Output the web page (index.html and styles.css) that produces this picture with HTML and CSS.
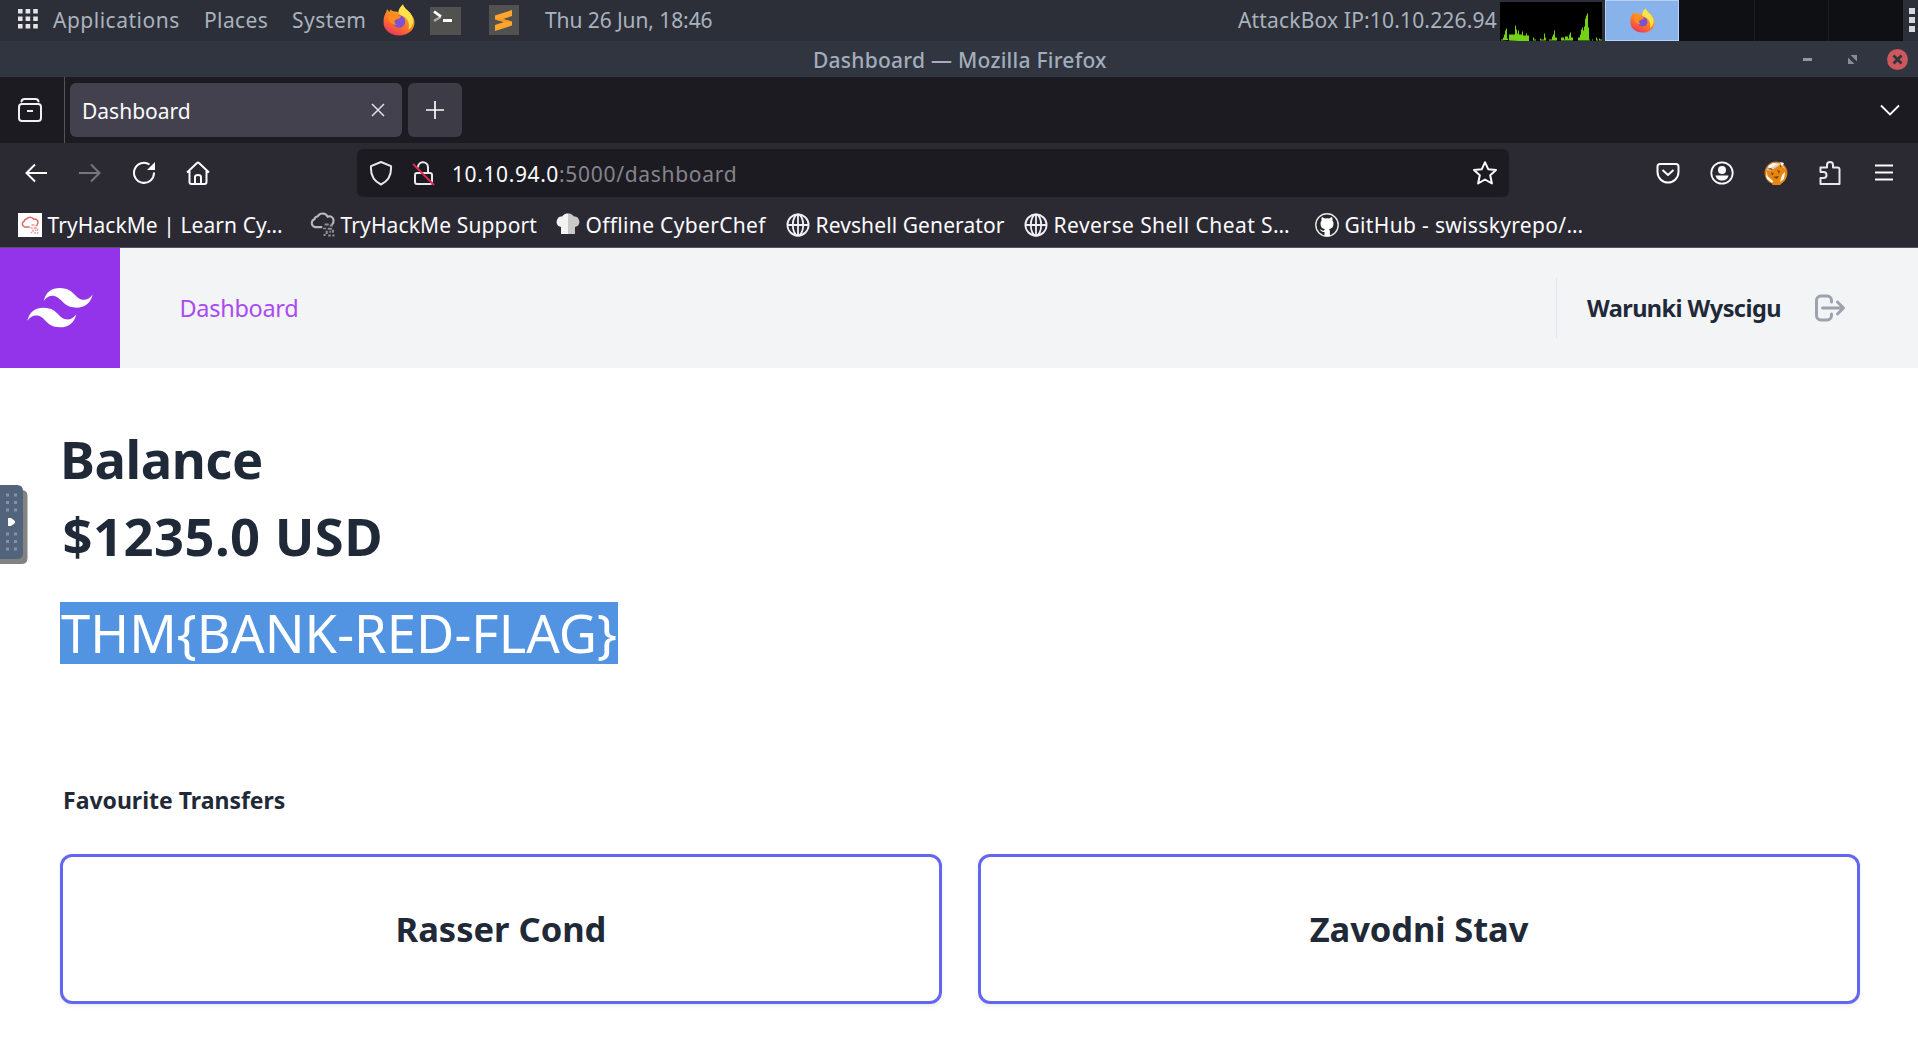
FILE: index.html
```html
<!DOCTYPE html>
<html lang="en">
<head>
<meta charset="utf-8">
<title>Dashboard</title>
<link rel="stylesheet" href="styles.css">
</head>
<body>
<svg class="defs" width="0" height="0">
  <defs>
    <linearGradient id="fx-body" x1="0.8" y1="0" x2="0.3" y2="1">
      <stop offset="0" stop-color="#ffe04a"/><stop offset="0.35" stop-color="#ff9a22"/><stop offset="0.7" stop-color="#ff6a2c"/><stop offset="1" stop-color="#e8365f"/>
    </linearGradient>
    <symbol id="firefox" viewBox="0 0 32 32">
      <path fill="url(#fx-body)" d="M20 .5c1 4 5 5.500 7.500 9 2 2.500 4 5 4 9C31.500 26 25 31.500 16 31.500S.5 26 .5 18c0-5 1.500-8.500 3-10.500l.5-2.500 2.500 3 1-2.500C9 7 10.500 7.500 12 7.500c1.500 0 2.500.3 3.500 1C15.500 5.500 17.500 2.500 20 .5z"/>
      <path fill="#ffe14a" d="M20 .5c1 4 5 5.500 7.500 9 2 3 3 6 2.500 10-1 3-2.500 5-4.500 6 1.500-6-.5-10.500-4-12.500-3-1.500-5.500-2.500-6-4.500C15.500 5.500 17.500 2.500 20 .5z"/>
      <circle cx="16" cy="17.500" r="6.300" fill="#7e52cf"/>
      <path fill="#ff8a20" d="M5 11c3-2 7-2 10 0l3 1.500c-1 2.500-4 2.500-6 3.500-1 1.500 0 4 2 5-4 0-8-3-9-6z"/>
    </symbol>
    <symbol id="globe" viewBox="0 0 24 24">
      <g fill="none" stroke="#f0eff5" stroke-width="1.800"><circle cx="12" cy="12" r="10.600"/><ellipse cx="12" cy="12" rx="5.200" ry="10.600"/><path d="M1.500 12h21M12 1.500v21"/></g>
    </symbol>
    <symbol id="cloud" viewBox="0 0 24 24">
      <path fill="none" stroke="currentColor" stroke-width="2" stroke-linecap="round" d="M11 14.500H4.500a4 4 0 0 1-.3-7.500A3.800 3.800 0 0 1 7.500 4 5.500 5.500 0 0 1 17 4.500a4 4 0 0 1 5.500 4.500c0 1.500-1 2.500-1 2.500"/>
      <path fill="currentColor" opacity=".7" d="M14 11h4v2h-4zM19 12h3v2h-3zM12.500 15h3v1.500h-3zM17 15h4v2h-4zM15 18h2v3h-2zM18.500 18h1.500v2h-1.500zM21 17h2v3h-2zM13 21h2v2h-2zM17.500 21.500h2.500v2h-2.500zM21.500 21.500h2v2h-2z"/>
    </symbol>
  </defs>
</svg>

<header class="panel">
  <svg class="apps" width="20" height="20" viewBox="0 0 20 20"><path fill="#e3e5e8" d="M0 0h4.600v4.600H0zM7.600 0h4.600v4.600H7.600zM15.200 0h4.600v4.600h-4.600zM0 7.500h4.600v4.600H0zM7.600 7.500h4.600v4.600H7.600zM15.200 7.500h4.600v4.600h-4.600zM0 15h4.600v4.600H0zM7.600 15h4.600v4.600H7.600zM15.200 15h4.600v4.600h-4.600z"/></svg>
  <span class="t-apps">Applications</span>
  <span class="t-places">Places</span>
  <span class="t-system">System</span>
  <svg class="launcher" width="32" height="32"><use href="#firefox"/></svg>
  <svg width="31" height="28" viewBox="0 0 31 28"><path fill="#515250" d="M0 0h31v28H0z"/><path fill="none" stroke="#aaa" stroke-width="2.600" d="M4 14l6.500-4"/><path fill="none" stroke="#fff" stroke-width="2.800" d="M4 4.500l7 5.200"/><path fill="#fff" d="M13 12h9v3h-9z"/></svg>
  <svg class="launcher" width="30" height="30" viewBox="0 0 30 30"><path fill="#515250" d="M0 0h30v30H0z"/><path fill="#ffa52e" d="M6 10.500L23 5v6l-9 3 9 2.500v4L6 26v-6l9-3-9-2.500z"/><path fill="#f59524" d="M6 14.500l8-.5 9 2.500-8 .5z"/></svg>
  <span class="t-clock">Thu 26 Jun, 18:46</span>
  <span class="t-ip">AttackBox IP:10.10.226.94</span>
  <svg class="cpu" width="102" height="40" viewBox="0 0 102 40"><path fill="#000" d="M0 1h102v39H0z"/><path fill="#73d216" d="M1 39.500v-1h2v-2h1v-3h1v-4h1v-2h1v10h1v1.500zM9 39.500v-6h6v-9h1v4h1v4h1v-3h1v4h3v-3h1v4h3v-2h1v2h2v6zM33 39.500v-3h1v2h2v1zM40 39.500v-2h1v1h3v-6h1v4h1v3zM49 39.500v-1h3v-3h1v-2h1v-4h1v7h2v3zM61 39.500v-3h3v2h1v-3h3v2h1v-4h1v-2h1v5h2v3zM78 39.500v-3h2v-3h1v-5h1v-2h1v3h1v-4h1v-8h1v-3h1v-2h1v14h1v12h1v1zM92 39.500v-1h1v1zM96 39.500v-3h1v2h1v1zM99 39.500v-2h1v1h2v1z"/></svg>
  <div class="workspace active"><svg width="25" height="25"><use href="#firefox"/></svg></div>
  <div class="workspaces"><i></i><i></i><i></i></div>
  <svg class="grip" width="6" height="26" viewBox="0 0 6 26"><path fill="#d5d8dc" d="M0 0h6v6H0zM0 9h6v6H0zM0 18h6v6H0z"/></svg>
</header>

<div class="titlebar">
  <span class="t-title">Dashboard — Mozilla Firefox</span>
  <div class="window-controls">
    <svg width="9" height="21" viewBox="0 0 9 21"><path fill="#9197a3" d="M0 9h9v3H0z"/></svg>
    <svg width="9" height="21" viewBox="0 0 9 21"><path fill="#868c98" d="M2.500 6H9v6.500zM0 8.500v6.500h6.500z"/></svg>
    <svg width="21" height="21" viewBox="0 0 21 21"><circle cx="10.500" cy="10.500" r="10.500" fill="#cc575d"/><path stroke="#2f343f" stroke-width="2.800" d="M6.500 6.500l8 8M14.500 6.500l-8 8"/></svg>
  </div>
</div>

<div class="tabs">
  <div class="view"><svg width="24" height="24" viewBox="0 0 24 24" fill="none" stroke="#f0eff5" stroke-width="2"><path d="M3.500 3.500Q4 1 6.500 1h11q2.500 0 3 2.500" stroke-linecap="round"/><rect x="1" y="6" width="22" height="17" rx="3"/><path d="M9 13h6"/></svg></div>
  <div class="tab"><span class="t-tab">Dashboard</span><svg width="14" height="14" viewBox="0 0 14 14"><path stroke="#e0dfe6" stroke-width="1.500" d="M1 1l12 12M13 1L1 13"/></svg></div>
  <div class="newtab"><svg width="18" height="18" viewBox="0 0 18 18"><path stroke="#fbfbfe" stroke-width="1.700" d="M9 0v18M0 9h18"/></svg></div>
  <svg class="chevron" width="20" height="12" viewBox="0 0 20 12"><path fill="none" stroke="#fbfbfe" stroke-width="1.800" d="M1 1.500l9 9 9-9"/></svg>
</div>

<div class="toolbar">
  <div class="buttons">
    <svg width="24" height="24" viewBox="0 0 24 24" fill="none" stroke="#fbfbfe" stroke-width="2"><path d="M23 12H3M11 3.500L2.500 12l8.500 8.500"/></svg>
    <svg width="24" height="24" viewBox="0 0 24 24" fill="none" stroke="#77767f" stroke-width="2"><path d="M1 12h20M13 3.500l8.500 8.500-8.500 8.500"/></svg>
    <svg width="24" height="24" viewBox="0 0 24 24"><path fill="none" stroke="#fbfbfe" stroke-width="2" d="M22 11.500A10 10 0 1 1 17.500 3.500"/><path fill="#fbfbfe" d="M23 1v8h-8z"/></svg>
    <svg width="24" height="24" viewBox="0 0 24 24" fill="none" stroke="#fbfbfe" stroke-width="2" stroke-linejoin="round"><path d="M1 11.500L11 2q1-1 2 0l10 9.500M3.500 10v11q0 2 2 2h13q2 0 2-2V10M9 23v-7q0-2 3-2t3 2v7"/></svg>
  </div>
  <div class="urlbar">
    <svg class="shield" width="24" height="26" viewBox="0 0 24 26"><path fill="none" stroke="#e8e7ee" stroke-width="2" stroke-linejoin="round" d="M12 2l10 4.200c.6 8-2.500 14.800-10 18.300C4.500 21 1.400 14.200 2 6.200z"/></svg>
    <svg class="lock" width="24" height="26" viewBox="0 0 24 26"><path fill="none" stroke="#e8e7ee" stroke-width="2" d="M7 7.500A5 5 0 0 1 17 7v6M5 13h14q2 0 2 2v7q0 2-2 2H6q-2 0-2-2v-7q0-2 2-2"/><path stroke="#e22850" stroke-width="2" d="M2 4l21 21"/></svg>
    <span class="t-host">10.10.94.0</span><span class="t-path">:5000/dashboard</span>
    <svg class="star" width="26" height="26" viewBox="0 0 26 26"><path fill="none" stroke="#fbfbfe" stroke-width="2" stroke-linejoin="round" d="M13 2.200l3.200 7 7.800.8-5.800 5.200 1.700 8.300-6.900-4-6.900 4 1.700-8.300L2 10l7.800-.8z"/></svg>
  </div>
  <div class="buttons end">
    <svg width="24" height="24" viewBox="0 0 24 24" fill="none" stroke="#fbfbfe" stroke-width="2"><path d="M4 3h16q2.500 0 2.500 2.500v5.500a10.300 10.300 0 0 1-21 0V5.500Q1.500 3 4 3zM6.500 9l5.500 5 5.500-5" stroke-linejoin="round"/></svg>
    <svg width="24" height="24" viewBox="0 0 24 24"><circle cx="12" cy="12" r="10.700" fill="none" stroke="#fbfbfe" stroke-width="1.800"/><circle cx="12" cy="9" r="4" fill="#fbfbfe"/><path fill="#fbfbfe" d="M5.500 14.500h13c-.5 3-3 5-6.500 5s-6-2-6.500-5z"/></svg>
    <svg width="24" height="24" viewBox="0 0 24 24"><circle cx="12" cy="12" r="10.800" fill="#ddd5c8" stroke="#d9790a" stroke-width="1.300"/><path fill="#e8860d" d="M2 9l5 .5 8-5 4-3v5l3 2 1 5-2 6-5 4.500-8 .5 1-4-5-5z"/><path fill="#7a430c" d="M7 11l3 1.500-2 2zM13 9l3 1-1 3zM9 16l6-1-2 3zM3 8l4-1 2 2zM16 6l1-4 1 4z"/><path fill="#fff" d="M16 1l2 5 2-4zM18 14l3-3-1 7-4 3zM2 14l7 6-1 2-5-4zM4 5l5-3 4 1-7 4z"/></svg>
    <svg width="24" height="26" viewBox="0 0 24 26" fill="none" stroke="#e8e7ee" stroke-width="2" stroke-linejoin="round"><path d="M2.500 24V18h3a3 3 0 0 0 0-6h-3V7.500H9V5a3 3 0 0 1 6 0v2.500h4.500q2 0 2 2V24z"/></svg>
    <svg width="24" height="24" viewBox="0 0 24 24"><path stroke="#fbfbfe" stroke-width="1.900" d="M3 4.500h18M3 11.500h18M3 18.500h18"/></svg>
  </div>
</div>

<nav class="bookmarks">
  <a><svg class="red" width="24" height="24" viewBox="-4 -4 32 32"><path fill="#fff" d="M-4-4h32v32H-4z"/><use href="#cloud" width="24" height="24"/></svg><span class="t-b1">TryHackMe | Learn Cy…</span></a>
  <a><svg class="grey" width="25" height="25"><use href="#cloud"/></svg><span class="t-b2">TryHackMe Support</span></a>
  <a><svg width="24" height="24" viewBox="0 0 24 24"><path fill="#f3f3f3" d="M5 21v-7C1 13 0 10 1 7c1-3 3-4 5-3.500C8 1 10 .5 12 .5V21z"/><path fill="#c9c9c9" d="M19 21v-7c4-1 5-4 4-7-1-3-3-4-5-3.500C16 1 14 .5 12 .5V21z"/></svg><span class="t-b3">Offline CyberChef</span></a>
  <a><svg width="24" height="24"><use href="#globe"/></svg><span class="t-b4">Revshell Generator</span></a>
  <a><svg width="24" height="24"><use href="#globe"/></svg><span class="t-b5">Reverse Shell Cheat S…</span></a>
  <a><svg width="24" height="24" viewBox="0 0 24 24"><circle cx="12" cy="12" r="11.200" fill="#24292e" stroke="#e8e8e8" stroke-width="1.400"/><path fill="#fff" d="M9.500 23v-4c-3 .5-3.500-1.500-5-2.500 2-.5 2.500 1.500 4.500 1.200.2-.8.500-1.300.9-1.700C7 15.500 5.500 14 5.500 10.500c0-1.300.4-2.300 1.100-3.100-.3-1-.2-2.200.2-3.100 1.200 0 2.200.7 3 1.300a10 10 0 0 1 4.400 0c.8-.6 1.800-1.300 3-1.300.4.9.5 2.100.2 3.100.7.800 1.100 1.800 1.100 3.100 0 3.500-1.500 5-4.400 5.500.5.500.8 1.300.8 2.500V23z"/></svg><span class="t-b6">GitHub - swisskyrepo/…</span></a>
</nav>

<div class="site-nav">
  <div class="brand"><svg width="66" height="40" viewBox="0 0 54 33"><path fill="#fff" fill-rule="evenodd" d="M27 0c-7.200 0-11.700 3.600-13.500 10.800 2.700-3.600 5.850-4.950 9.450-4.050 2.054.513 3.522 2.004 5.147 3.653C30.744 13.090 33.808 16.200 40.500 16.200c7.200 0 11.700-3.600 13.500-10.800-2.700 3.600-5.850 4.950-9.450 4.050-2.054-.513-3.522-2.004-5.147-3.653C36.756 3.110 33.692 0 27 0zM13.500 16.200C6.300 16.200 1.800 19.800 0 27c2.700-3.600 5.850-4.950 9.450-4.050 2.054.514 3.522 2.004 5.147 3.653C17.244 29.290 20.308 32.400 27 32.400c7.200 0 11.700-3.600 13.500-10.800-2.700 3.600-5.850 4.950-9.450 4.050-2.054-.513-3.522-2.004-5.147-3.653C23.256 19.310 20.192 16.200 13.500 16.200z"/></svg></div>
  <a class="t-nav">Dashboard</a>
  <div class="user">
    <span class="t-user">Warunki Wyscigu</span>
    <svg width="36" height="36" viewBox="0 0 24 24" fill="none" stroke="#9ca3af" stroke-width="2" stroke-linecap="round" stroke-linejoin="round"><path d="M17 16l4-4m0 0l-4-4m4 4H7m6 4v1a3 3 0 01-3 3H6a3 3 0 01-3-3V7a3 3 0 013-3h4a3 3 0 013 3v1"/></svg>
  </div>
</div>

<main class="content">
  <h1 class="balance">Balance</h1>
  <p class="amount">$1235.0 USD</p>
  <p class="flag">THM{BANK-RED-FLAG}</p>
  <h2 class="favourites">Favourite Transfers</h2>
  <div class="cards">
    <div class="card">Rasser Cond</div>
    <div class="card zav">Zavodni Stav</div>
  </div>
</main>

<svg class="handle" width="28" height="79" viewBox="0 0 28 79">
  <path fill="#828282" d="M0 5h21.500q6 0 6 6v62q0 6-6 6H0z"/>
  <path fill="#52647b" d="M0 0h17q6 0 6 6v62q0 6-6 6H0z"/>
  <path fill="#8492a6" d="M6 8.500h3v3H6zM14 8.500h3v3h-3zM6 16h3v3H6zM14 16h3v3h-3zM6 23.500h3v3H6zM14 23.500h3v3h-3zM6 47.500h3v3H6zM14 47.500h3v3h-3zM6 55h3v3H6zM14 55h3v3h-3zM6 62.500h3v3H6zM14 62.500h3v3h-3z"/>
  <path fill="#fff" d="M8 33h3l4 3v2l-4 3H8z"/>
</svg>
</body>
</html>
```
FILE: styles.css
```css
* { box-sizing: border-box; }
body {
  margin: 0;
  height: 1038px;
  overflow: hidden;
  background: #fff;
  color: #1f2937;
  font-family: "Noto Sans", "Open Sans", sans-serif;
  font-size: 21px;
  white-space: nowrap;
}
svg { display: block; flex: none; }
.defs { position: absolute; }

/* Desktop panel */
.panel {
  display: grid;
  grid-template-columns: 53px 151px 88px 91px 47px 59px 56px 693px 262px 104px 75px 1fr 15px;
  align-items: center;
  height: 41px;
  background: #2c2f37;
  color: #a9b2bf;
}
.panel > span { line-height: 39px; padding-bottom: 1px; }
.apps { margin-left: 18px; margin-top: -3px; }
.launcher { margin-top: -1px; }
.t-apps { letter-spacing: .5px; }
.t-places { letter-spacing: .4px; }
.t-system { letter-spacing: .5px; }
.t-clock { letter-spacing: -.09px; }
.t-ip { letter-spacing: .17px; }
.workspace {
  display: flex;
  align-items: center;
  justify-content: center;
  height: 41px;
  margin-left: 1px;
  background: #88b3ea;
  border: 1px solid #b5d2f6;
}
.workspaces {
  display: grid;
  grid-template-columns: 1fr 1fr 1fr;
  height: 41px;
  background: #0f1013;
}
.workspaces i + i { border-left: 1px solid #1b1d21; }
.grip { margin-left: 6px; }

/* Window title */
.titlebar {
  display: grid;
  grid-template-columns: 813px 1fr auto;
  align-items: center;
  height: 36px;
  background: #303540;
  color: #a3adbb;
}
.t-title { grid-column: 2; padding-top: 2px; font-weight: 500; letter-spacing: .25px; }
.window-controls { display: flex; gap: 36px; padding-right: 10px; }
.window-controls svg:last-child { margin-left: -6px; }

/* Tab strip */
.tabs {
  display: flex;
  align-items: center;
  height: 66px;
  background: #1c1b22;
  color: #fbfbfe;
}
.view {
  display: flex;
  align-items: center;
  width: 65px;
  height: 66px;
  padding-left: 18px;
  border-right: 1px solid #55545e;
}
.tab {
  display: flex;
  align-items: center;
  justify-content: space-between;
  width: 332px;
  height: 54px;
  margin-left: 5px;
  padding: 0 17px 0 12px;
  border-radius: 6px;
  background: #42414d;
}
.t-tab { padding-top: 2px; }
.newtab {
  display: flex;
  align-items: center;
  justify-content: center;
  width: 54px;
  height: 54px;
  margin-left: 6px;
  border-radius: 6px;
  background: #3c3b46;
}
.chevron { margin-left: auto; margin-right: 18px; }

/* Navigation toolbar */
.toolbar {
  display: flex;
  align-items: center;
  justify-content: space-between;
  height: 60px;
  padding: 0 7px 0 9px;
  background: #2b2a33;
}
.buttons { display: grid; grid-template-columns: repeat(4, 54px); justify-items: center; align-items: center; }
.buttons.end { grid-template-columns: repeat(5, 54px); }
.urlbar {
  display: flex;
  align-items: center;
  width: 1152px;
  height: 48px;
  padding: 0 11px 0 12px;
  border-radius: 6px;
  background: #1c1b22;
}
.lock { margin: 0 17px 0 18px; }
.t-host { color: #fbfbfe; letter-spacing: .6px; padding-top: 1px; }
.t-path { color: #85848c; letter-spacing: .7px; padding-top: 1px; }
.star { margin-left: auto; }

/* Bookmarks toolbar */
.bookmarks {
  display: grid;
  grid-template-columns: 292px 246px 230px 238px 291px 1fr;
  align-items: center;
  height: 45px;
  padding: 0 0 1px 18px;
  border-bottom: 1px solid #55545e;
  background: #2b2a33;
  color: #fbfbfe;
}
.bookmarks a { display: flex; align-items: center; gap: 5.5px; }
.red { color: #dc6b6b; }
.grey { color: #b9b9bd; }
.t-b1 { letter-spacing: .08px; }
.t-b2 { letter-spacing: .13px; }
.t-b3 { letter-spacing: .33px; }
.t-b4 { letter-spacing: .1px; }
.t-b5 { letter-spacing: .45px; }
.t-b6 { letter-spacing: .33px; }

/* Site navigation */
.site-nav {
  display: flex;
  align-items: center;
  height: 120px;
  background: #f3f4f6;
}
.brand {
  display: flex;
  align-items: center;
  justify-content: center;
  width: 120px;
  height: 120px;
  background: #9333ea;
}
.t-nav { margin-left: 59.5px; color: #a94bf2; font-size: 23.5px; letter-spacing: -.3px; }
.user {
  display: flex;
  align-items: center;
  justify-content: space-between;
  width: 292px;
  height: 60px;
  margin-left: auto;
  margin-right: 70px;
  padding-left: 30px;
  border-left: 1px solid #e2e5e9;
}
.t-user { font-size: 23.5px; font-weight: 700; letter-spacing: -.56px; }

/* Dashboard content */
.content { padding: 52px 58px 0 60px; }
h1, h2, p { margin: 0; }
.balance, .amount { font-size: 52.5px; font-weight: 700; line-height: 77px; }
.balance { letter-spacing: -.45px; }
.amount { margin-left: 2.5px; letter-spacing: .45px; }
.flag {
  width: 558px;
  margin-top: 28px;
  padding-left: 1px;
  background: #5294e2;
  color: #fff;
  font-size: 52.5px;
  letter-spacing: .05px;
  line-height: 62px;
}
.favourites { margin: 118px 0 0 3px; font-size: 23px; font-weight: 700; line-height: 36px; }
.cards { display: grid; grid-template-columns: 1fr 1fr; gap: 36px; margin-top: 36px; }
.card {
  display: flex;
  align-items: center;
  justify-content: center;
  height: 150px;
  padding-bottom: 2px;
  border: 3px solid #6366f1;
  border-radius: 12px;
  box-shadow: 0 2px 4px rgba(0, 0, 0, .08);
  font-size: 34.5px;
  font-weight: 700;
}
.zav { letter-spacing: -.1px; }

/* Slide-out handle over the left edge */
.handle { position: absolute; left: 0; top: 485px; }
```
